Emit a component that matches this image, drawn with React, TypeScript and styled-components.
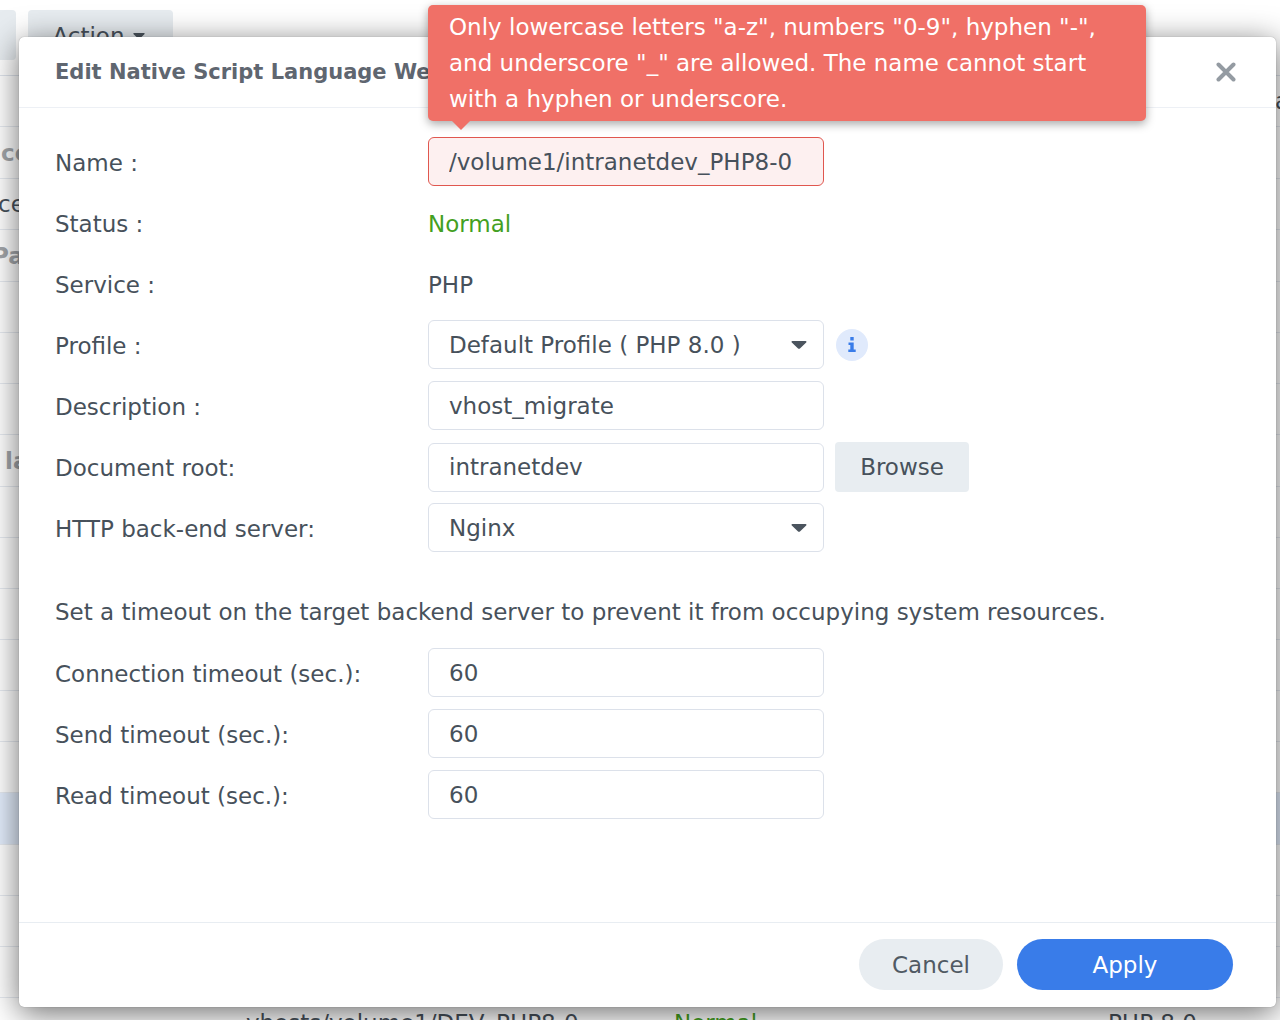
import React, { useLayoutEffect, useRef, useState } from "react";
import styled, { createGlobalStyle } from "styled-components";

const GlobalStyle = createGlobalStyle`
  *, *::before, *::after { box-sizing: border-box; }
  html, body, #root { height: 100%; }
  body {
    margin: 0;
    overflow: hidden;
    background: #fff;
    color: #47515b;
    font-family: Verdana, "DejaVu Sans", sans-serif;
    font-size: 23px;
    line-height: 36px;
  }
  button, input, select { font: inherit; color: inherit; }
`;

const Page = styled.div`
  position: relative;
  height: 100%;
  overflow: hidden;
`;

const Backdrop = styled.div`
  height: 100%;
  overflow: hidden;
`;

const Toolbar = styled.div`
  display: flex;
  gap: 12px;
  height: 75px;
  padding-top: 10px;
`;

const ToolButton = styled.button<{ $first?: boolean }>`
  display: flex;
  align-items: center;
  justify-content: center;
  gap: 8px;
  width: ${(p) => (p.$first ? "16px" : "145px")};
  height: 50px;
  padding: 2px 4px 0 0;
  border: 0;
  border-radius: ${(p) => (p.$first ? "0 4px 4px 0" : "4px")};
  background: #e7ecf0;
`;

const ListTable = styled.table`
  width: calc(100% + 8px);
  margin-left: -8px;
  table-layout: fixed;
  border-collapse: separate;
  border-spacing: 0;
  border-top: 1px solid #dfe4ec;
`;

const Col = styled.col<{ $w?: number }>`
  width: ${(p) => (p.$w ? `${p.$w}px` : "auto")};
`;

const ListRow = styled.tr<{ $group?: boolean; $selected?: boolean }>`
  height: ${(p) => (p.$group || p.$selected ? 52 : 51)}px;
  background: ${(p) => (p.$selected ? "#e3edfc" : "#fff")};
  color: ${(p) => (p.$group ? "#a3a6aa" : "#47515b")};
  font-weight: ${(p) => (p.$group ? 700 : 400)};
`;

const Cell = styled.td<{ $indent?: number; $ok?: boolean }>`
  padding: 0 0 0 ${(p) => p.$indent ?? 0}px;
  border-bottom: 1px solid #e6eaf0;
  white-space: nowrap;
  color: ${(p) => (p.$ok ? "#43a022" : "inherit")};
`;

const Overlay = styled.div`
  position: absolute;
  inset: 0;
  display: flex;
  padding: 37px 4px 13px 19px;
`;

const Dialog = styled.form`
  display: flex;
  flex: 1;
  flex-direction: column;
  min-width: 0;
  border-radius: 5px;
  background: #fff;
  box-shadow: 0 6px 32px rgba(0, 0, 0, 0.58), 0 0 1px rgba(0, 0, 0, 0.4);
`;

const DialogHeader = styled.header`
  display: flex;
  align-items: center;
  justify-content: space-between;
  height: 71px;
  padding: 0 36px;
  border-bottom: 1px solid #edf0f5;
`;

const Title = styled.h1`
  margin: 0;
  color: #5f6670;
  font-size: 21px;
  font-weight: 700;
`;

const CloseButton = styled.button`
  display: flex;
  align-items: center;
  justify-content: center;
  width: 28px;
  height: 28px;
  padding: 0;
  border: 0;
  background: none;
`;

const DialogBody = styled.div`
  display: flex;
  flex: 1;
  flex-direction: column;
  gap: 12px;
  padding: 29px 36px;
`;

const Field = styled.div`
  display: grid;
  grid-template-columns: 373px 396px auto;
  justify-content: start;
  align-items: center;
  height: 49px;

  > label,
  > span {
    padding-top: 2px;
  }
`;

const Control = styled.div`
  position: relative;
  display: flex;
`;

const TextInput = styled.input<{ $invalid?: boolean }>`
  width: 100%;
  height: 49px;
  padding: 0 20px;
  border: 1px solid ${(p) => (p.$invalid ? "#e0574f" : "#dce1ea")};
  border-radius: 6px;
  outline: 0;
  background: ${(p) => (p.$invalid ? "#fdf0f0" : "#fff")};
`;

const Select = styled.select`
  width: 100%;
  height: 49px;
  padding: 0 48px 0 20px;
  border: 1px solid #dce1ea;
  border-radius: 6px;
  outline: 0;
  appearance: none;
  background: #fff;
`;

const SelectArrow = styled.i`
  position: absolute;
  right: 17px;
  top: 0;
  bottom: 0;
  display: flex;
  align-items: center;
  pointer-events: none;
`;

const Status = styled.span`
  color: #43a022;
`;

const Note = styled.p`
  margin: 24px 0 0;
  line-height: 48px;
`;

const InfoButton = styled.button`
  display: flex;
  align-items: center;
  justify-content: center;
  width: 32px;
  height: 32px;
  margin-left: 12px;
  padding: 0;
  border: 0;
  border-radius: 50%;
  background: #e0eafc;
`;

const BrowseButton = styled.button`
  width: 134px;
  height: 50px;
  margin-left: 11px;
  padding: 0;
  border: 0;
  border-radius: 4px;
  background: #e8edf1;
`;

const DialogFooter = styled.footer`
  display: flex;
  justify-content: flex-end;
  gap: 14px;
  height: 85px;
  padding: 16px 43px 0;
  border-top: 1px solid #e8edf2;
`;

const PillButton = styled.button<{ $primary?: boolean }>`
  width: ${(p) => (p.$primary ? 216 : 144)}px;
  height: 51px;
  padding: 0;
  border: 0;
  border-radius: 26px;
  background: ${(p) => (p.$primary ? "#397ce9" : "#e8edf1")};
  color: ${(p) => (p.$primary ? "#fff" : "#505a64")};
`;

const ErrorTip = styled.div`
  position: absolute;
  left: 0;
  bottom: calc(100% + 16px);
  width: 718px;
  padding: 4px 21px;
  border-radius: 5px;
  background: #f07067;
  box-shadow: 0 3px 10px rgba(0, 0, 0, 0.35);
  color: #fff;
`;

const TipArrow = styled.svg`
  position: absolute;
  left: 24px;
  top: 100%;
`;

function Caret({ size = 16 }: { size?: number }) {
  return (
    <svg width={size} height={size / 2} viewBox="0 0 16 8" aria-hidden="true">
      <path d="M1.4 0h13.2c.9 0 1.2 1 .6 1.6L9.2 7.3c-.7.7-1.7.7-2.4 0L.8 1.6C.2 1 .5 0 1.4 0z" fill="#4b545e" />
    </svg>
  );
}

type Row = { group?: boolean; selected?: boolean; label?: string; indent?: number; name?: string; status?: string; service?: string };

const rows: Row[] = [
  { group: true, label: "ce", indent: 9 },
  { label: "ce", indent: 6 },
  { group: true, label: "Pa" },
  {}, {}, {},
  { group: true, label: "la", indent: 13 },
  {}, {}, {}, {}, {}, {},
  { selected: true },
  {}, {}, {},
  { name: "vhosts/volume1/DEV_PHP8-0", status: "Normal", service: "PHP 8.0" },
];

function PortalList() {
  return (
    <ListTable>
      <colgroup>
        <Col $w={254} />
        <Col $w={428} />
        <Col $w={434} />
        <Col $w={167} />
        <Col />
      </colgroup>
      <tbody>
        <ListRow>
          <Cell colSpan={4} />
          <Cell>a</Cell>
        </ListRow>
        {rows.map((row, i) => (
          <ListRow key={i} $group={row.group} $selected={row.selected}>
            <Cell $indent={row.indent}>{row.label}</Cell>
            <Cell>{row.name}</Cell>
            <Cell $ok>{row.status}</Cell>
            <Cell>{row.service}</Cell>
            <Cell />
          </ListRow>
        ))}
      </tbody>
    </ListTable>
  );
}

function NameField() {
  const ref = useRef<HTMLInputElement>(null);
  const [name, setName] = useState("/volume1/intranetdev_PHP8-0");

  // Keep the end of a long path in view.
  useLayoutEffect(() => {
    if (ref.current) ref.current.scrollLeft = ref.current.scrollWidth;
  }, []);

  return (
    <Field>
      <label htmlFor="name">Name :</label>
      <Control>
        <TextInput
          id="name"
          ref={ref}
          $invalid
          aria-invalid="true"
          aria-describedby="name-error"
          value={name}
          onChange={(e) => setName(e.target.value)}
        />
        <ErrorTip id="name-error" role="alert">
          Only lowercase letters "a-z", numbers "0-9", hyphen "-", and underscore "_" are allowed. The name cannot start
          with a hyphen or underscore.
          <TipArrow width="18" height="9" viewBox="0 0 18 9" aria-hidden="true">
            <path d="M0 0h18L9 9z" fill="#f07067" />
          </TipArrow>
        </ErrorTip>
      </Control>
    </Field>
  );
}

function TextField({ id, label, value, children }: { id: string; label: string; value: string; children?: React.ReactNode }) {
  return (
    <Field>
      <label htmlFor={id}>{label}</label>
      <TextInput id={id} defaultValue={value} />
      {children}
    </Field>
  );
}

function SelectField({ id, label, value, children }: { id: string; label: string; value: string; children?: React.ReactNode }) {
  return (
    <Field>
      <label htmlFor={id}>{label}</label>
      <Control>
        <Select id={id} defaultValue={value}>
          <option>{value}</option>
        </Select>
        <SelectArrow>
          <Caret />
        </SelectArrow>
      </Control>
      {children}
    </Field>
  );
}

export default function App() {
  return (
    <Page>
      <GlobalStyle />
      <Backdrop>
        <Toolbar>
          <ToolButton $first type="button" aria-label="Create" />
          <ToolButton type="button">
            Action <Caret size={12} />
          </ToolButton>
        </Toolbar>
        <PortalList />
      </Backdrop>
      <Overlay>
        <Dialog role="dialog" aria-labelledby="dialog-title" onSubmit={(e) => e.preventDefault()}>
          <DialogHeader>
            <Title id="dialog-title">Edit Native Script Language Website</Title>
            <CloseButton type="button" aria-label="Close">
              <svg width="20" height="20" viewBox="0 0 20 20" aria-hidden="true">
                <path d="M2.5 2.5l15 15M17.5 2.5l-15 15" stroke="#949ba2" strokeWidth="4" strokeLinecap="round" />
              </svg>
            </CloseButton>
          </DialogHeader>
          <DialogBody>
            <NameField />
            <Field>
              <span>Status :</span>
              <Status>Normal</Status>
            </Field>
            <Field>
              <span>Service :</span>
              <span>PHP</span>
            </Field>
            <SelectField id="profile" label="Profile :" value="Default Profile ( PHP 8.0 )">
              <InfoButton type="button" aria-label="Profile information">
                <svg width="8" height="15" viewBox="0 0 8 15" aria-hidden="true">
                  <path d="M2.3 0h3.4v3.6H2.3zM.5 5.6h5.2v6.9h2V15H.3v-2.500h2V8H.5z" fill="#397ce9" />
                </svg>
              </InfoButton>
            </SelectField>
            <TextField id="description" label="Description :" value="vhost_migrate" />
            <TextField id="root-folder" label="Document root:" value="intranetdev">
              <BrowseButton type="button">Browse</BrowseButton>
            </TextField>
            <SelectField id="backend" label="HTTP back-end server:" value="Nginx" />
            <Note>Set a timeout on the target backend server to prevent it from occupying system resources.</Note>
            <TextField id="connect-timeout" label="Connection timeout (sec.):" value="60" />
            <TextField id="send-timeout" label="Send timeout (sec.):" value="60" />
            <TextField id="read-timeout" label="Read timeout (sec.):" value="60" />
          </DialogBody>
          <DialogFooter>
            <PillButton type="button">Cancel</PillButton>
            <PillButton type="submit" $primary>
              Apply
            </PillButton>
          </DialogFooter>
        </Dialog>
      </Overlay>
    </Page>
  );
}
